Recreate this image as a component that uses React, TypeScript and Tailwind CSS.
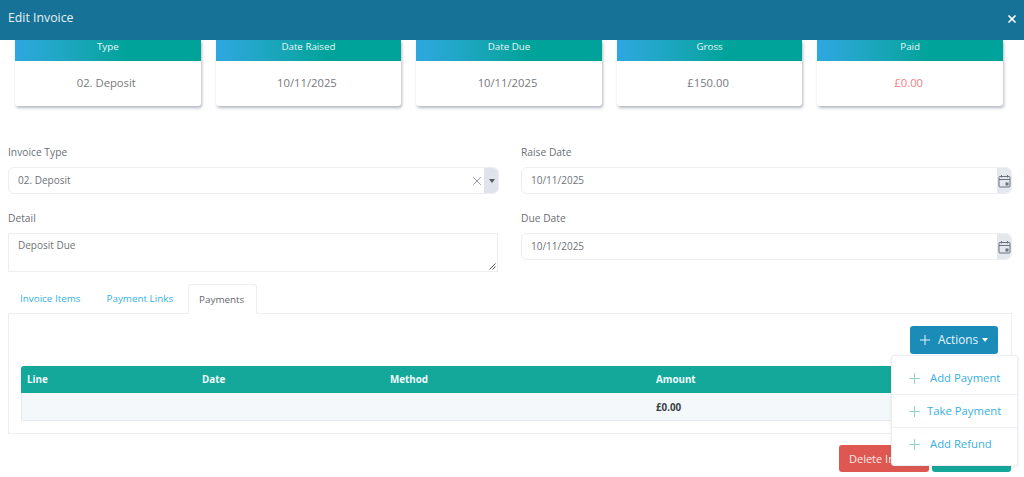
import { Plus, X } from "lucide-react";

const cards = [
  { title: "Type", value: "02. Deposit" },
  { title: "Date Raised", value: "10/11/2025" },
  { title: "Date Due", value: "10/11/2025" },
  { title: "Gross", value: "£150.00" },
  { title: "Paid", value: "£0.00", red: true },
];

const actions = [
  { label: "Add Payment", gap: "ml-[7px]" },
  { label: "Take Payment", gap: "ml-[4px]" },
  { label: "Add Refund", gap: "ml-[7px]" },
];

function CalendarIcon() {
  return (
    <svg width="13" height="14" viewBox="0 0 13 14" fill="none" stroke="#6b7280" strokeWidth="1">
      <rect x="1" y="2.5" width="11" height="10.5" rx="1" />
      <path d="M1 5.5h11M3.5 1v2.5M9.5 1v2.5" />
      <rect x="7.5" y="8.5" width="3" height="3" fill="#6b7280" stroke="none" />
    </svg>
  );
}

function DateField({ label, value }: { label: string; value: string }) {
  return (
    <div className="flex-1">
      <div className="h-[24px] text-[10.25px] leading-[16px] text-[#6b6f76] pt-[1px]">{label}</div>
      <div className="flex h-[27px] rounded-[6px] border border-[#eceef2] overflow-hidden">
        <div className="flex-1 pl-[9px] text-[10px] leading-[25px] text-[#6e7277]">{value}</div>
        <div className="w-[15px] -mr-[1px] bg-[#e4e7ec] flex items-center justify-center">
          <CalendarIcon />
        </div>
      </div>
    </div>
  );
}

export default function App() {
  return (
    <div
      className="relative h-[477px] w-[1024px] overflow-hidden bg-white"
      style={{ fontFamily: '"Open Sans", sans-serif' }}
    >
      <div className="relative z-10 flex h-10 items-center justify-between bg-[#177298] pb-[3px] pl-2 pr-[6px] text-white">
        <span className="text-[12.3px] text-[#e8f1f5]">Edit Invoice</span>
        <X size={12} strokeWidth={3.5} />
      </div>

      <div className="flex gap-[15px] pl-[15px] pr-[21px]">
        {cards.map((c) => (
          <div key={c.title} className="flex-1 h-[66px] rounded-b-[3px] bg-white shadow-[1px_2px_3px_rgba(90,100,120,0.45)]">
            <div className="h-[21px] bg-gradient-to-r from-[#2ea7e0] to-[#00a39a] to-[60%] text-center text-[9.75px] leading-[14px] text-[#e6f6f5]">
              {c.title}
            </div>
            <div className={`pr-[3px] text-center text-[11.25px] leading-[43px] ${c.red ? "text-[#f08080]" : "text-[#77797c]"}`}>
              {c.value}
            </div>
          </div>
        ))}
      </div>

      <div className="flex gap-[22px] pl-2 pr-3 mt-[37px]">
        <div className="flex-1">
          <div className="h-[24px] text-[10.25px] leading-[16px] text-[#6b6f76] pt-[1px]">Invoice Type</div>
          <div className="flex h-[27px] rounded-[6px] border border-[#eceef2] overflow-hidden">
            <div className="flex-1 pl-[9px] text-[10px] leading-[25px] text-[#6e7277]">02. Deposit</div>
            <div className="flex w-[15px] items-center justify-center">
              <X size={14} strokeWidth={1.5} className="shrink-0 text-[#8a8d92]" />
            </div>
            <div className="w-[15px] -mr-[1px] bg-[#e0e3e9] flex items-center justify-center">
              <div className="h-0 w-0 border-x-[3.5px] border-t-[4px] border-x-transparent border-t-[#565a60]" />
            </div>
          </div>
        </div>
        <DateField label="Raise Date" value="10/11/2025" />
      </div>

      <div className="flex gap-[22px] pl-2 pr-3 mt-[15px]">
        <div className="flex-1">
          <div className="h-[24px] text-[10.25px] leading-[16px] text-[#6b6f76] pt-[1px]">Detail</div>
          <div className="relative h-[39px] w-[490px] border border-[#eceef2] pl-[9px] pt-[4px] text-[10px] leading-[15px] text-[#6e7277]">
            Deposit Due
            <svg className="absolute bottom-[1px] right-[1px]" width="7" height="7" viewBox="0 0 7 7" stroke="#555" strokeWidth="1">
              <path d="M0.5 6.5L6.5 0.5M3.5 6.5L6.5 3.5" />
            </svg>
          </div>
        </div>
        <DateField label="Due Date" value="10/11/2025" />
      </div>

      <div className="relative z-[1] ml-2 mr-3 mt-[12px] -mb-[1px] flex h-[30px] text-[9.85px]">
        <div className="pl-[12px] pr-[12px] leading-[29px] text-[#38b0e0]">Invoice Items</div>
        <div className="pl-[14px] pr-[15px] leading-[29px] text-[#38b0e0]">Payment Links</div>
        <div className="rounded-t-[3px] border border-[#eceef2] border-b-white bg-white pl-[10px] pr-[12px] leading-[29px] text-[#63676c]">Payments</div>
      </div>
      <div className="ml-2 mr-3 h-[121px] border border-[#eceef2] pl-3 pr-[13px] pt-3">
        <div className="flex justify-end">
          <div className="flex h-[28px] w-[88px] items-center rounded-[3px] bg-[#1b8cb8] pl-[7px] text-[11.75px] text-[#e6f4f9]">
            <Plus size={16} strokeWidth={1.5} />
            <span className="ml-[5px]">Actions</span>
            <span className="ml-[4px] h-0 w-0 border-x-[3.5px] border-t-[4px] border-x-transparent border-t-white" />
          </div>
        </div>
        <div className="mt-3 grid h-[27px] grid-cols-[175px_188px_266px_1fr] rounded-t-[3px] bg-[#14a89b] pl-[6px] text-[9.8px] font-bold leading-[27px] text-[#f0faf9]">
          <span>Line</span>
          <span>Date</span>
          <span>Method</span>
          <span>Amount</span>
        </div>
        <div className="grid h-[28px] grid-cols-[175px_188px_266px_1fr] border border-t-0 border-[#e6eaf0] bg-[#f4f8fb] pl-[5px] text-[9.8px] font-bold leading-[29px] text-[#3b3f44]">
          <span />
          <span />
          <span />
          <span>£0.00</span>
        </div>
      </div>

      <div className="mt-[11px] flex justify-end gap-[3px] pr-[13px]">
        <div className="h-[27px] w-[90px] rounded-[3px] bg-[#de5751] pl-[10px] text-[11px] leading-[27px] text-[#fde9e8]">Delete Invoice</div>
        <div className="h-[27px] w-[79px] rounded-[3px] bg-[#14a89b] text-center text-[11px] leading-[27px] text-white">Save</div>
      </div>

      {/* dropdown sits over the table and footer buttons */}
      <div className="absolute left-[891px] top-[355px] z-20 h-[111px] w-[127px] rounded-[3px] border border-[#eceef2] bg-white pt-[6px] text-[11.3px] text-[#38b0e0] shadow-[0_1px_3px_rgba(90,100,120,0.15)]">
        {actions.map((a, i) => (
          <div
            key={a.label}
            className={`flex h-[33px] items-center pl-[14px] ${i < 2 ? "border-b border-[#eef0f3]" : ""}`}
          >
            <Plus size={17} strokeWidth={1.5} className="shrink-0 text-[#8fd3cc]" />
            <span className={a.gap}>{a.label}</span>
          </div>
        ))}
      </div>
    </div>
  );
}
